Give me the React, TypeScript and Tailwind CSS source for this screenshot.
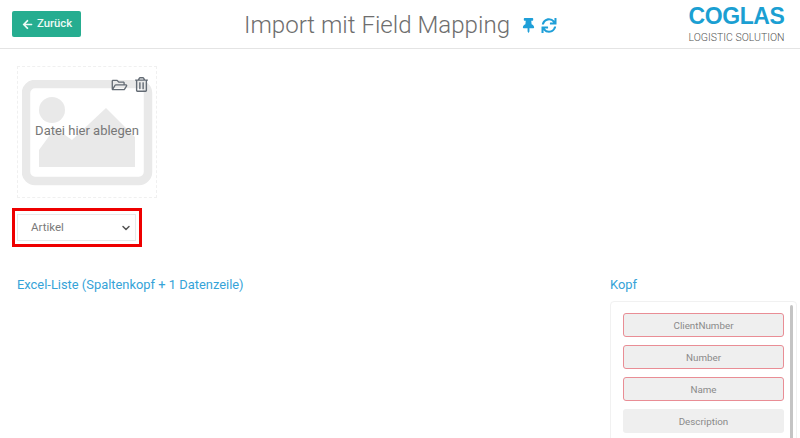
import React from "react";
import { FaArrowLeft, FaThumbtack, FaSync, FaRegFolderOpen, FaRegTrashAlt } from "react-icons/fa";
import { ChevronDown } from "lucide-react";

const fields = [
  { name: "ClientNumber", req: true },
  { name: "Number", req: true },
  { name: "Name", req: true },
  { name: "Description", req: false },
];

export default function App() {
  return (
    <div className="h-[438px] w-[800px] overflow-hidden bg-white font-['Roboto',sans-serif] text-[#6b6b6b]">
      <header className="flex h-[49px] items-start border-b border-[#e4e4e4]">
        <button className="ml-3 mt-[11px] flex h-[26px] w-[69px] items-center justify-center gap-[4px] rounded-[2px] bg-[#26ad90] pl-[1px] text-[11.3px] font-medium text-[#eefaf6]">
          <FaArrowLeft className="h-[11px] w-[11px]" />
          Zurück
        </button>
        <div className="ml-[163px] mt-[9px] flex w-[320px] items-center">
          <h1 className="whitespace-nowrap text-[24.1px] font-light leading-[32px] text-[#6e6e6e]">Import mit Field Mapping</h1>
          <FaThumbtack className="ml-[12px] h-[15px] w-[13px] text-[#1f9fd8]" />
          <FaSync className="ml-[6px] h-[15px] w-[16px] text-[#1f9fd8]" />
        </div>
        <div className="ml-[125px] mt-[5px] flex w-[95px] flex-col items-center">
          <span className="font-['Liberation_Sans',sans-serif] text-[23px] font-bold leading-[23px] tracking-[-0.4px] text-[#1b9fd2]">COGLAS</span>
          <span className="mt-[3px] whitespace-nowrap text-[10.5px] font-light leading-[13px] text-[#555]">LOGISTIC SOLUTION</span>
        </div>
      </header>

      <main className="flex flex-col pt-[17px]">
        <div className="relative ml-[17px] flex h-[132px] w-[140px] items-center justify-center border border-dashed border-[#f0f0f0]">
          <svg className="absolute left-[4px] top-[13px]" width="131" height="106" viewBox="0 0 131 106">
            <rect x="4" y="4" width="122" height="97" rx="9" fill="none" stroke="#e9e9e9" strokeWidth="8.5" />
            <circle cx="30" cy="30" r="13" fill="#e9e9e9" />
            <path d="M17 87 V70 L33 48 L50 60 L84 28 L113 57 V87 Z" fill="#e9e9e9" />
          </svg>
          <div className="absolute right-[8px] top-[10px] flex items-center gap-[7px] text-[#636b74]">
            <FaRegFolderOpen className="h-[14px] w-[17px]" />
            <FaRegTrashAlt className="h-[15px] w-[13px]" />
          </div>
          <span className="relative -mt-[2px] text-[13px] text-[#777]">Datei hier ablegen</span>
        </div>

        <div className="ml-3 mt-[10px] w-[130px] border-[3px] border-[#ee0000] px-[2px] py-[3px]">
          <div className="flex h-[27px] w-[119px] items-center justify-between border border-[#e6eaea] pl-[13px] pr-[3px] text-[11.5px] text-[#7a7a7a]">
            Artikel
            <ChevronDown className="h-[12px] w-[12px] text-[#555]" strokeWidth={3} />
          </div>
        </div>

        <div className="mt-[29px] flex items-start">
          <h2 className="ml-[17px] w-[593px] text-[12.9px] leading-[17px] text-[#35a3d8]">Excel-Liste (Spaltenkopf + 1 Datenzeile)</h2>
          <div className="flex flex-col">
            <h2 className="text-[12.9px] leading-[17px] text-[#35a3d8]">Kopf</h2>
            <div className="relative mt-[8px] flex w-[187px] flex-col gap-2 rounded-[4px] border border-[#f1f1f1] pb-2 pl-[12px] pt-[11px]">
              {fields.map((f) => (
                <div
                  key={f.name}
                  className={`flex h-[24px] w-[161px] items-center justify-center rounded-[3px] bg-[#efefef] pt-[2px] text-[9.8px] text-[#8a8a8a] ${f.req ? "border border-[#e98d95]" : ""}`}
                >
                  {f.name}
                </div>
              ))}
              <div className="absolute right-[3px] top-[3px] h-[140px] w-[3px] rounded bg-[#c4c4c4]" />
            </div>
          </div>
        </div>
      </main>
    </div>
  );
}
